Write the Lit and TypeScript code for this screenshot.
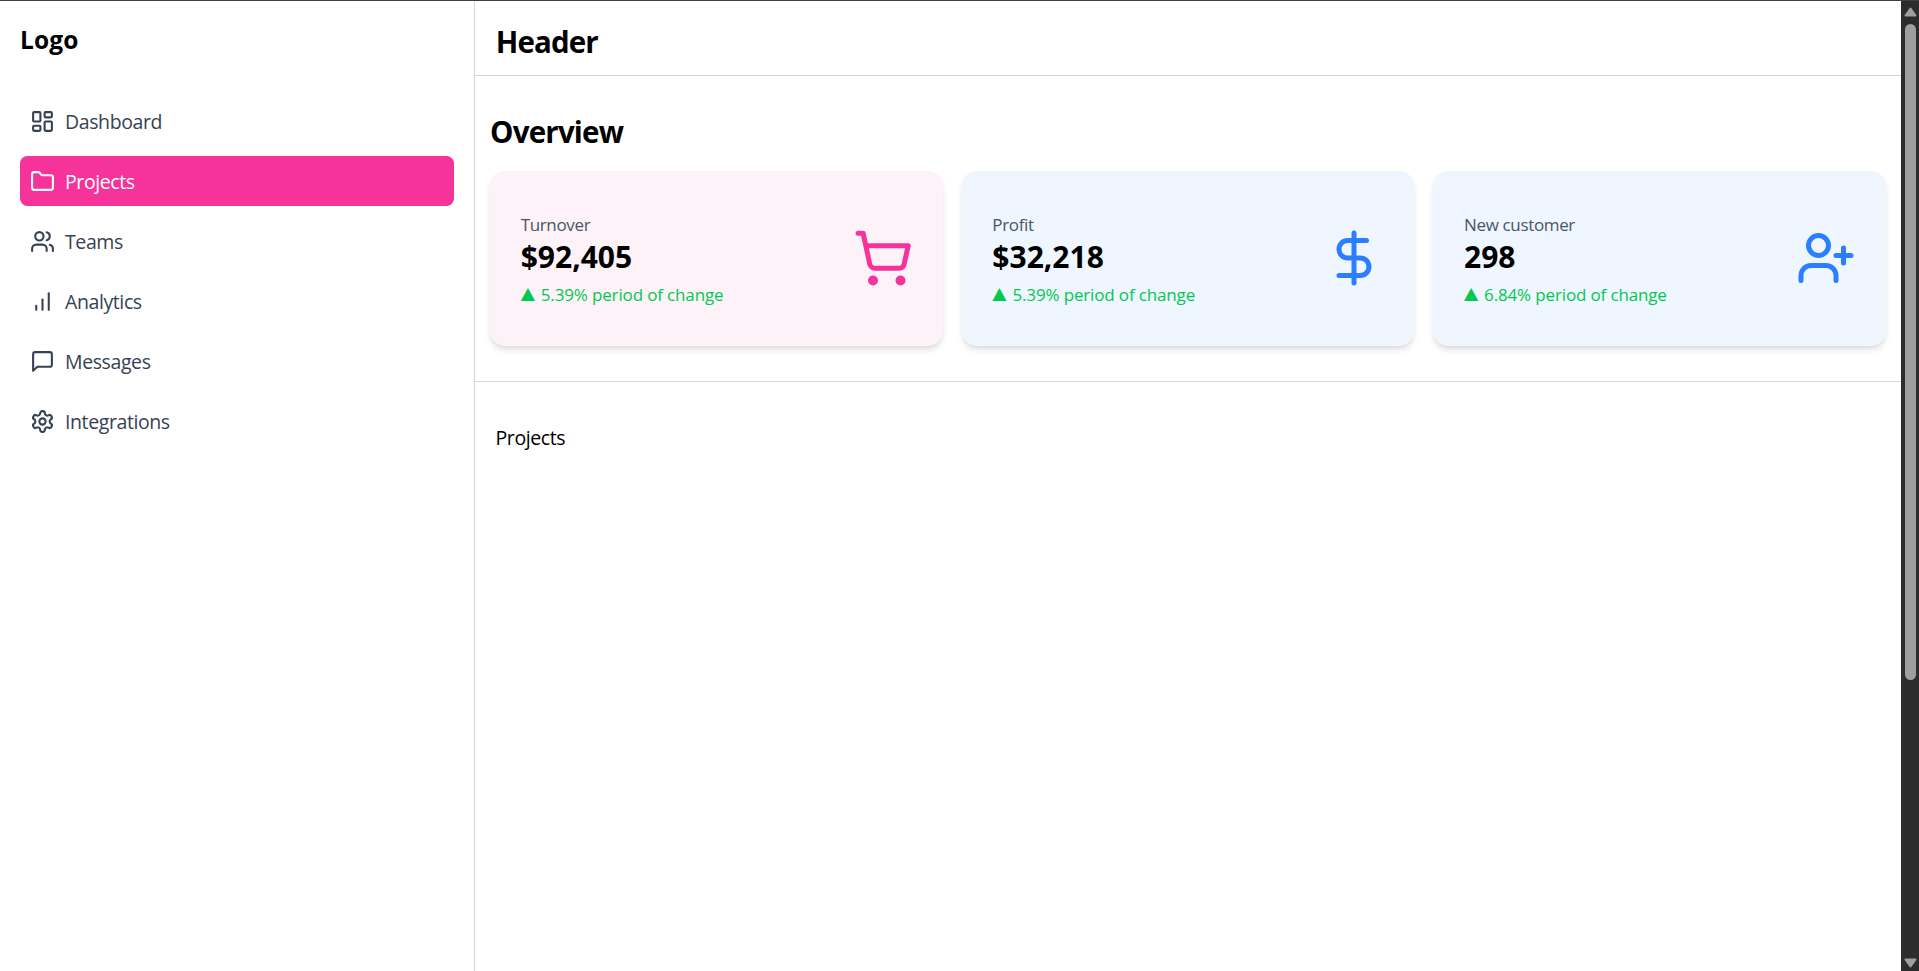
import { LitElement, html, svg, css } from "lit";
import { customElement, property } from "lit/decorators.js";

const icons: Record<string, unknown> = {
  dashboard: svg`<rect width="7" height="9" x="3" y="3" rx="1"/><rect width="7" height="5" x="14" y="3" rx="1"/><rect width="7" height="9" x="14" y="12" rx="1"/><rect width="7" height="5" x="3" y="16" rx="1"/>`,
  folder: svg`<path d="M20 20a2 2 0 0 0 2-2V8a2 2 0 0 0-2-2h-7.900a2 2 0 0 1-1.690-.900L9.600 3.900A2 2 0 0 0 7.930 3H4a2 2 0 0 0-2 2v13a2 2 0 0 0 2 2Z"/>`,
  users: svg`<path d="M16 21v-2a4 4 0 0 0-4-4H6a4 4 0 0 0-4 4v2"/><circle cx="9" cy="7" r="4"/><path d="M22 21v-2a4 4 0 0 0-3-3.870"/><path d="M16 3.130a4 4 0 0 1 0 7.750"/>`,
  bars: svg`<line x1="12" x2="12" y1="20" y2="10"/><line x1="18" x2="18" y1="20" y2="4"/><line x1="6" x2="6" y1="20" y2="16"/>`,
  message: svg`<path d="M21 15a2 2 0 0 1-2 2H7l-4 4V5a2 2 0 0 1 2-2h14a2 2 0 0 1 2 2z"/>`,
  settings: svg`<path d="M12.220 2h-.440a2 2 0 0 0-2 2v.180a2 2 0 0 1-1 1.730l-.430.250a2 2 0 0 1-2 0l-.150-.080a2 2 0 0 0-2.730.730l-.220.380a2 2 0 0 0 .730 2.730l.150.100a2 2 0 0 1 1 1.720v.510a2 2 0 0 1-1 1.740l-.150.090a2 2 0 0 0-.730 2.730l.220.380a2 2 0 0 0 2.730.730l.150-.080a2 2 0 0 1 2 0l.430.250a2 2 0 0 1 1 1.730V20a2 2 0 0 0 2 2h.440a2 2 0 0 0 2-2v-.180a2 2 0 0 1 1-1.730l.430-.250a2 2 0 0 1 2 0l.150.080a2 2 0 0 0 2.730-.730l.220-.390a2 2 0 0 0-.730-2.730l-.150-.080a2 2 0 0 1-1-1.740v-.500a2 2 0 0 1 1-1.740l.150-.090a2 2 0 0 0 .730-2.730l-.220-.380a2 2 0 0 0-2.730-.730l-.150.080a2 2 0 0 1-2 0l-.430-.250a2 2 0 0 1-1-1.730V4a2 2 0 0 0-2-2z"/><circle cx="12" cy="12" r="3"/>`,
  cart: svg`<circle cx="8" cy="21" r="1"/><circle cx="19" cy="21" r="1"/><path d="M2.050 2.050h2l2.660 12.420a2 2 0 0 0 2 1.580h9.780a2 2 0 0 0 1.950-1.570l1.650-7.430H5.120"/>`,
  dollar: svg`<line x1="12" x2="12" y1="2" y2="22"/><path d="M17 5H9.500a3.500 3.500 0 0 0 0 7h5a3.500 3.500 0 0 1 0 7H6"/>`,
  userPlus: svg`<path d="M16 21v-2a4 4 0 0 0-4-4H6a4 4 0 0 0-4 4v2"/><circle cx="9" cy="7" r="4"/><line x1="19" x2="19" y1="8" y2="14"/><line x1="22" x2="16" y1="11" y2="11"/>`,
};

const nav = [
  ["dashboard", "Dashboard"],
  ["folder", "Projects"],
  ["users", "Teams"],
  ["bars", "Analytics"],
  ["message", "Messages"],
  ["settings", "Integrations"],
];

const stats = [
  { label: "Turnover", value: "$92,405", change: "5.39%", icon: "cart", tone: "pink" },
  { label: "Profit", value: "$32,218", change: "5.39%", icon: "dollar", tone: "blue" },
  { label: "New customer", value: "298", change: "6.84%", icon: "userPlus", tone: "blue" },
];

@customElement("line-icon")
class LineIcon extends LitElement {
  @property() name = "";
  static styles = css`
    :host { display: block; flex: none; width: 25px; height: 25px; }
    svg { display: block; width: 100%; height: 100%; }
  `;
  render() {
    return html`<svg viewBox="0 0 24 24" fill="none" stroke="currentColor" stroke-width="2" stroke-linecap="round" stroke-linejoin="round">${icons[this.name]}</svg>`;
  }
}

@customElement("stat-card")
class StatCard extends LitElement {
  @property({ attribute: false }) stat = stats[0];
  static styles = css`
    :host { display: block; min-width: 0; }
    .card {
      display: flex; align-items: center; justify-content: space-between;
      box-sizing: border-box; height: 175px; padding: 0 30px; border-radius: 15px;
      box-shadow: 0 5px 7.5px -1.25px rgba(0,0,0,.1), 0 2.5px 5px -2.5px rgba(0,0,0,.1);
    }
    .pink { background: #fdf2f8; }
    .blue { background: #eff6ff; }
    .pink line-icon { color: #f6339a; }
    .blue line-icon { color: #2b7fff; }
    line-icon { width: 60px; height: 60px; margin-bottom: 1px; }
    .text { padding: 2px 0 0 .7px; }
    .label { font-size: 17px; line-height: 25px; color: #4a5565; letter-spacing: -.35px; }
    .value { font-size: 30px; line-height: 40px; font-weight: 700; }
    .change { display: flex; align-items: baseline; gap: 6px; font-size: 17px; line-height: 25px; color: #00c950; margin-top: 5px; white-space: nowrap; letter-spacing: -.15px; }
    .tri { font-family: "DejaVu Sans", sans-serif; font-size: 18.500px; transform: translateY(-1.5px) scaleY(.92); }
  `;
  render() {
    const s = this.stat;
    return html`<div class="card ${s.tone}">
      <div class="text">
        <div class="label">${s.label}</div>
        <div class="value">${s.value}</div>
        <div class="change"><span class="tri">▲</span><span>${s.change} period of change</span></div>
      </div>
      <line-icon name=${s.icon}></line-icon>
    </div>`;
  }
}

@customElement("app-root")
class AppRoot extends LitElement {
  static styles = css`
    :host {
      display: flex; box-sizing: border-box; width: 100%; height: 971px; overflow: hidden;
      border-top: 1px solid #454035; background: #fff; color: #000;
      font-family: "Open Sans", "Noto Sans", sans-serif;
    }
    .sidebar { box-sizing: border-box; width: 475px; flex: none; border-right: 1px solid #d1d5dc; padding: 19px 20px; }
    .logo { font-size: 24.5px; line-height: 40px; font-weight: 700; letter-spacing: .1px; }
    nav { display: flex; flex-direction: column; gap: 10px; margin-top: 36px; }
    .item { display: flex; align-items: center; gap: 10px; height: 50px; box-sizing: border-box; padding: 0 10px; border-radius: 7.5px; color: #364153; font-size: 19.5px; letter-spacing: -.4px; }
    .item span { padding-top: 1px; }
    .active { background: #f6339a; color: #fff; }
    main { flex: 1; min-width: 0; }
    header { height: 74px; line-height: 82px; border-bottom: 1px solid #d1d5dc; padding-left: 20.7px; font-size: 29.5px; font-weight: 700; letter-spacing: -.85px; }
    .overview { height: 306px; box-sizing: border-box; border-bottom: 1px solid #d1d5dc; padding: 36px 15px 0; }
    h2 { margin: 0; font-size: 29.5px; line-height: 40px; font-weight: 700; letter-spacing: -.8px; }
    .cards { display: grid; grid-template-columns: repeat(3, 1fr); gap: 19px; margin-top: 19px; }
    .body { padding: 41px 20.5px; font-size: 19.5px; line-height: 30px; letter-spacing: -.4px; }
    .scroll { width: 18px; flex: none; background: #2c2c2c; display: flex; flex-direction: column; align-items: center; justify-content: space-between; padding: 6px 0 3px 1px; box-sizing: border-box; }
    .scroll svg { display: block; width: 13px; height: 10px; }
    .track { flex: 1; padding-top: 7px; }
    .thumb { width: 11px; height: 656px; border-radius: 6px; background: #9f9f9f; }
  `;
  render() {
    return html`
      <aside class="sidebar">
        <div class="logo">Logo</div>
        <nav>${nav.map(([icon, label]) => html`<div class="item ${label === "Projects" ? "active" : ""}"><line-icon name=${icon}></line-icon><span>${label}</span></div>`)}</nav>
      </aside>
      <main>
        <header>Header</header>
        <section class="overview">
          <h2>Overview</h2>
          <div class="cards">${stats.map((s) => html`<stat-card .stat=${s}></stat-card>`)}</div>
        </section>
        <section class="body">Projects</section>
      </main>
      <div class="scroll">
        <svg viewBox="0 0 13 10"><path d="M6.500 1.500 11.500 8.500H1.500Z" fill="#9f9f9f" stroke="#9f9f9f" stroke-width="2" stroke-linejoin="round"/></svg>
        <div class="track"><div class="thumb"></div></div>
        <svg viewBox="0 0 13 10"><path d="M6.500 8.500 11.500 1.500H1.500Z" fill="#9f9f9f" stroke="#9f9f9f" stroke-width="2" stroke-linejoin="round"/></svg>
      </div>`;
  }
}
